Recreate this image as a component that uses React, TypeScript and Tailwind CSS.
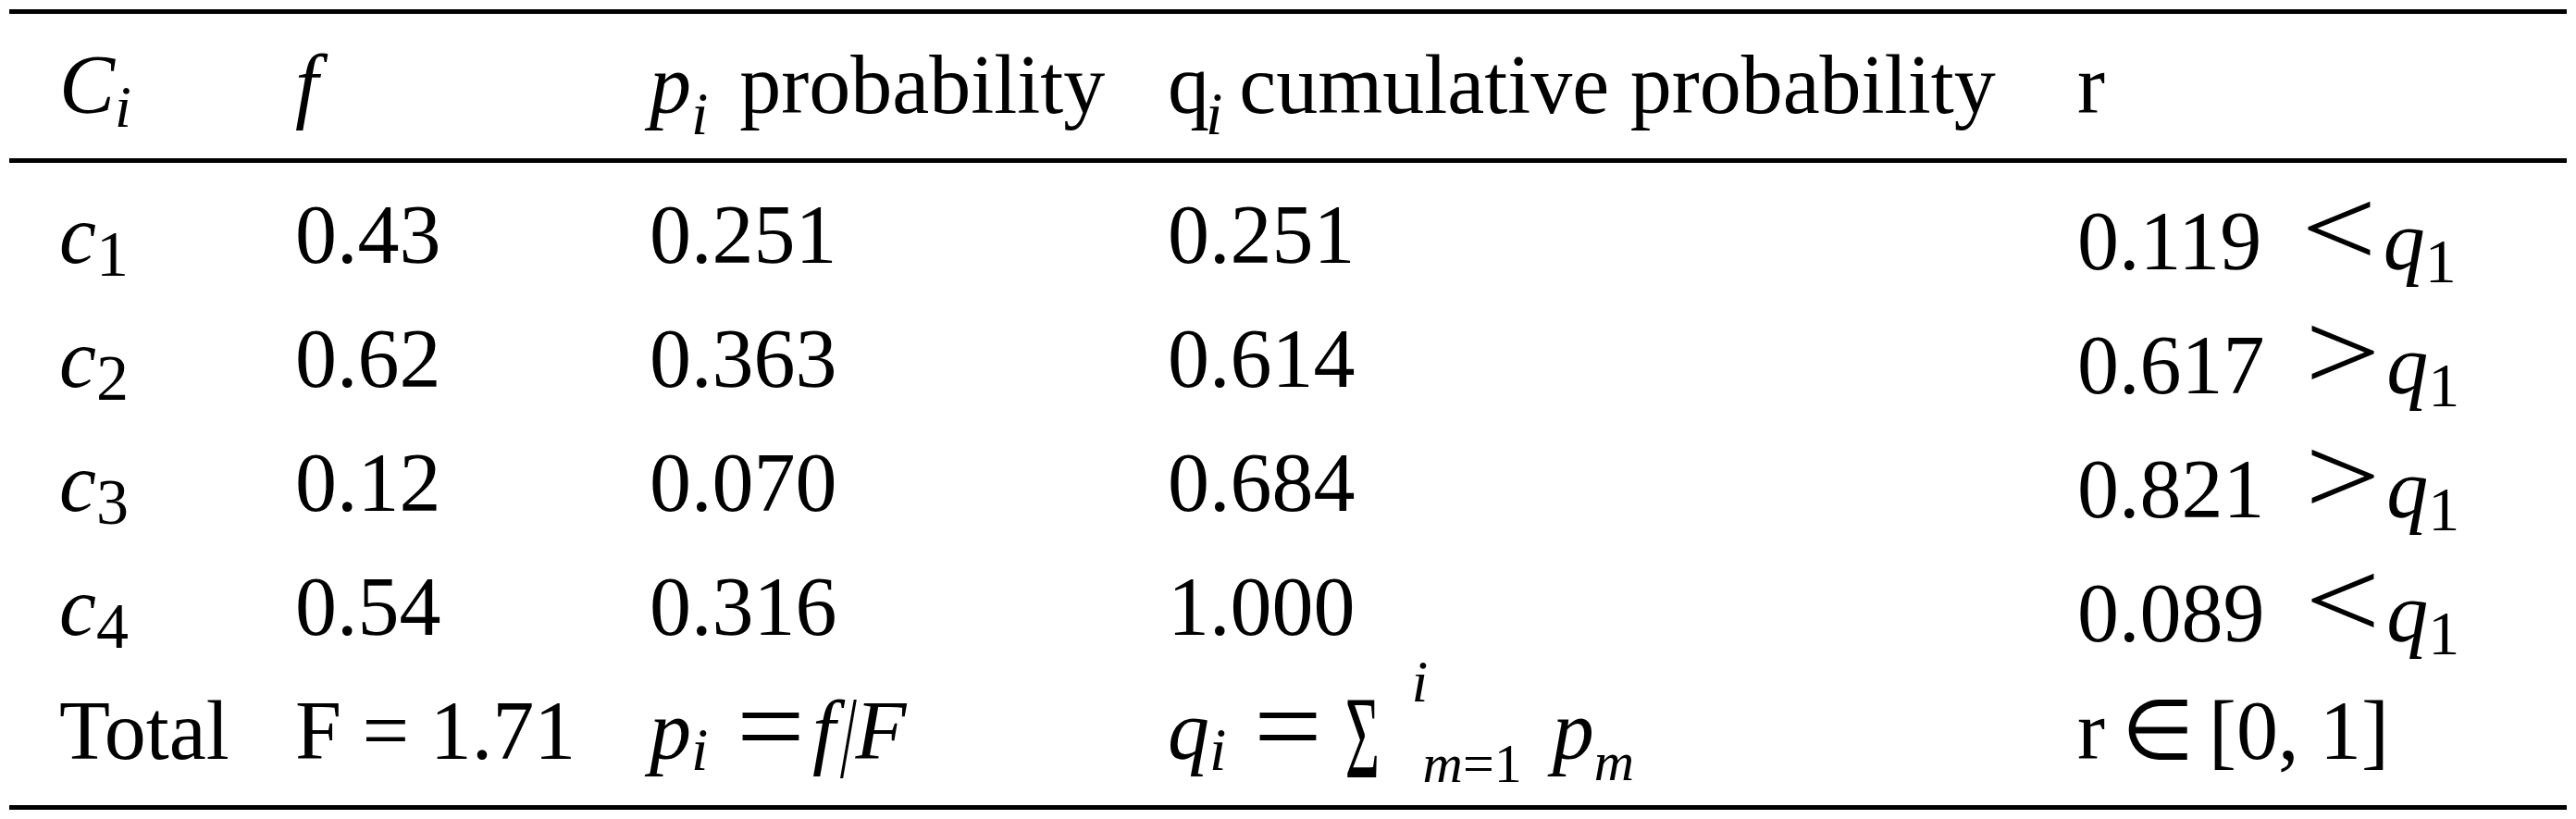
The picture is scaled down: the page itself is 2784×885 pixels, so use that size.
export default function App() {
  const rows = [
    { n: "1", f: "0.43", p: "0.251", q: "0.251", r: "0.119", op: "<" },
    { n: "2", f: "0.62", p: "0.363", q: "0.614", r: "0.617", op: ">" },
    { n: "3", f: "0.12", p: "0.070", q: "0.684", r: "0.821", op: ">" },
    { n: "4", f: "0.54", p: "0.316", q: "1.000", r: "0.089", op: "<" },
  ];

  const grid = "grid grid-cols-[255px_383px_560px_983px_1fr] pl-[54px] auto-rows-[134px] leading-[134px]";

  return (
    <div className="w-[2784px] h-[885px] bg-white text-black font-['Liberation_Serif',serif] text-[90px] whitespace-nowrap">
      <div className="mx-[10px] pt-[10px]">
        <div className="h-[5px] bg-black" />

        {/* header */}
        <div className={`${grid} pt-[10px] pb-[12px]`}>
          <div>
            <i>C</i>
            <i className="text-[64px] leading-none align-[-15px]">i</i>
          </div>
          <div>
            <i>f</i>
          </div>
          <div>
            <i>p</i>
            <i className="text-[66px] leading-none align-[-23px]">i</i>
            <span className="ml-[34px]">probability</span>
          </div>
          <div>
            <span>q</span>
            <i className="text-[66px] leading-none align-[-23px] -ml-[4px]">i</i>
            <span className="ml-[18px]">cumulative probability</span>
          </div>
          <div>r</div>
        </div>

        <div className="h-[5px] bg-black" />

        {/* body */}
        <div className={`${grid} pt-[11px] pb-[13px]`}>
          {rows.map((row) => (
            <div key={row.n} className="contents">
              <div>
                <i>c</i>
                <span className="text-[70px] leading-none align-[-14px]">{row.n}</span>
              </div>
              <div>{row.f}</div>
              <div>{row.p}</div>
              <div>{row.q}</div>
              <div>
                {row.r}
                <span className="inline-block ml-[50px] text-[120px] leading-none align-[4px] scale-x-[1.2]">{row.op}</span>
                <i className="ml-[14px]">q</i>
                <span className="text-[68px] leading-none align-[-14px]">1</span>
              </div>
            </div>
          ))}

          {/* total */}
          <div>Total</div>
          <div>F = 1.71</div>
          <div>
            <i>p</i>
            <i className="text-[66px] leading-none align-[-12px]">i</i>
            <span className="inline-block ml-[34px] text-[120px] leading-none align-[-5px] scale-x-[1.09]">=</span>
            <i className="ml-[11px]">f</i>
            <span className="inline-block -ml-[4px] -mr-[10px] text-9xl leading-none align-[-20px] scale-x-50">/</span>
            <i>F</i>
          </div>
          <div>
            <i>q</i>
            <i className="text-[66px] leading-none align-[-12px]">i</i>
            <span className="inline-block ml-[33px] text-[120px] leading-none align-[-5px] scale-x-[1.09]">=</span>
            <span className="inline-block ml-[9px] -mr-[4px] text-9xl leading-none align-[-20px] scale-x-50">Σ</span>
            <span className="inline-flex flex-col ml-[20px] align-[62px] gap-[68px] leading-[20px]">
              <i className="text-[64px]">i</i>
              <span className="ml-[12px] text-[60px]">
                <i>m</i>
                <span>=</span>
                <span>1</span>
              </span>
            </span>
            <i className="ml-[33px]">p</i>
            <i className="text-[60px] leading-none align-[-23px]">m</i>
          </div>
          <div>
            r
            <span className="ml-[18px]">∈</span>
            <span className="ml-[16px]">[0, 1]</span>
          </div>
        </div>

        <div className="h-[5px] bg-black" />
      </div>
    </div>
  );
}
